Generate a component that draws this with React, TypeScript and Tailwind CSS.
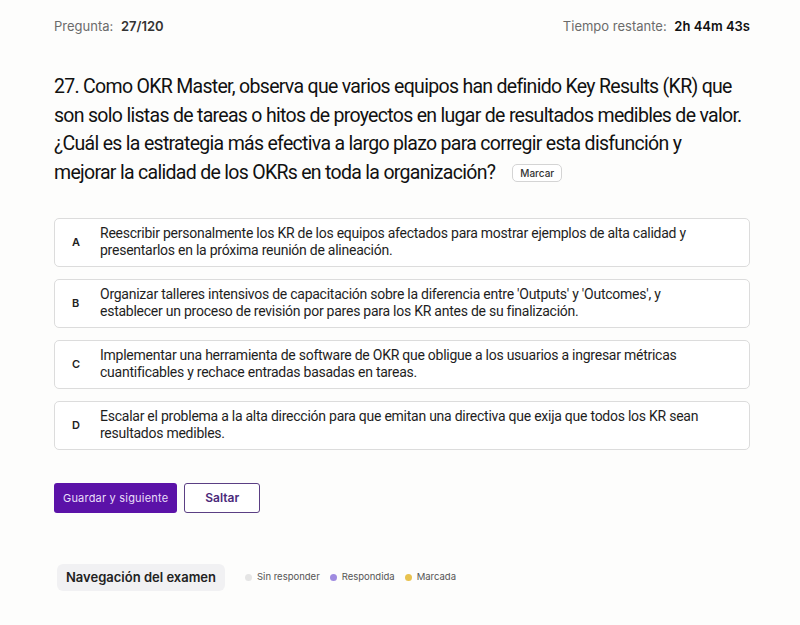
import React, { useState } from 'react';

interface Option {
    key: string;
    text: string;
}

const options: Option[] = [
    { key: 'A', text: 'Reescribir personalmente los KR de los equipos afectados para mostrar ejemplos de alta calidad y presentarlos en la próxima reunión de alineación.' },
    { key: 'B', text: "Organizar talleres intensivos de capacitación sobre la diferencia entre 'Outputs' y 'Outcomes', y establecer un proceso de revisión por pares para los KR antes de su finalización." },
    { key: 'C', text: 'Implementar una herramienta de software de OKR que obligue a los usuarios a ingresar métricas cuantificables y rechace entradas basadas en tareas.' },
    { key: 'D', text: 'Escalar el problema a la alta dirección para que emitan una directiva que exija que todos los KR sean resultados medibles.' },
];

export default function App() {
    const [selected, setSelected] = useState<string | null>(null);

    return (
        <div className="min-h-screen bg-[#fdfdfc] text-[#1c1c1c] font-['Inter','Noto_Sans',sans-serif]">
            <div className="w-[696px] ml-[54px] pt-[19px]">
                {/* Header */}
                <div className="flex items-center justify-between text-[13px] h-[16px]">
                    <div className="text-[#6b6b6b]">
                        Pregunta: <span className="ml-1 font-semibold text-[#333]">27/120</span>
                    </div>
                    <div className="text-[#6b6b6b]">
                        Tiempo restante: <span className="ml-1 font-semibold text-[#111]">2h 44m 43s</span>
                    </div>
                </div>

                {/* Question */}
                <h1 className="mt-[38px] font-['Roboto','Liberation_Sans',sans-serif] text-[19.5px] leading-[28.7px] font-normal tracking-[-0.7px] text-[#111]">
                    27. Como OKR Master, observa que varios equipos han definido Key Results (KR) que son solo listas de tareas o hitos de proyectos en lugar de resultados medibles de valor. ¿Cuál es la estrategia más efectiva a largo plazo para corregir esta disfunción y<br />
                    mejorar la calidad de los OKRs en toda la organización?
                    <button className="ml-[17px] align-middle relative -top-[1px] px-[7px] h-[18px] border border-[#d4d4d4] rounded-[5px] font-['Inter',sans-serif] text-[10px] leading-[16px] font-medium tracking-normal text-[#333] bg-white">Marcar</button>
                </h1>

                {/* Options */}
                <div className="mt-[30px] flex flex-col gap-[12px]">
                    {options.map(o => (
                        <button
                            key={o.key}
                            onClick={() => setSelected(o.key)}
                            className={`flex items-center h-[49px] w-full text-left rounded-[5px] border bg-white ${selected === o.key ? 'border-[#5b21b6]' : 'border-[#dcdcdc]'}`}
                        >
                            <span className="w-[45px] shrink-0 pl-[17px] text-[11px] font-semibold text-[#222]">{o.key}</span>
                            <span className="font-['Roboto','Liberation_Sans',sans-serif] text-[14px] leading-[17px] tracking-[-0.25px] text-[#1e1e1e] pr-[40px]">{o.text}</span>
                        </button>
                    ))}
                </div>

                {/* Actions */}
                <div className="mt-[33px] flex items-center gap-[7px]">
                    <button className="h-[30px] px-[9px] rounded-[3px] bg-[#5b12a8] text-[#e9defa] text-[11px] tracking-[0.2px]">Guardar y siguiente</button>
                    <button className="h-[30px] w-[76px] rounded-[3px] border border-[#5b3f84] bg-white text-[#4b2a7a] text-[12px] font-semibold">Saltar</button>
                </div>

                {/* Navigation */}
                <div className="mt-[51px] flex items-center">
                    <div className="ml-[3px] h-[27px] px-[9px] flex items-center rounded-[6px] bg-[#f1f1f3] text-[13px] font-semibold text-[#222]">Navegación del examen</div>
                    <div className="ml-[20px] flex items-center gap-[10px] text-[9.5px] text-[#555]">
                        <span className="flex items-center gap-[5px]"><span className="w-[7px] h-[7px] rounded-full bg-[#e5e5e5]" />Sin responder</span>
                        <span className="flex items-center gap-[5px]"><span className="w-[7px] h-[7px] rounded-full bg-[#9f8be0]" />Respondida</span>
                        <span className="flex items-center gap-[5px]"><span className="w-[7px] h-[7px] rounded-full bg-[#e8c24f]" />Marcada</span>
                    </div>
                </div>
            </div>
        </div>
    );
}
